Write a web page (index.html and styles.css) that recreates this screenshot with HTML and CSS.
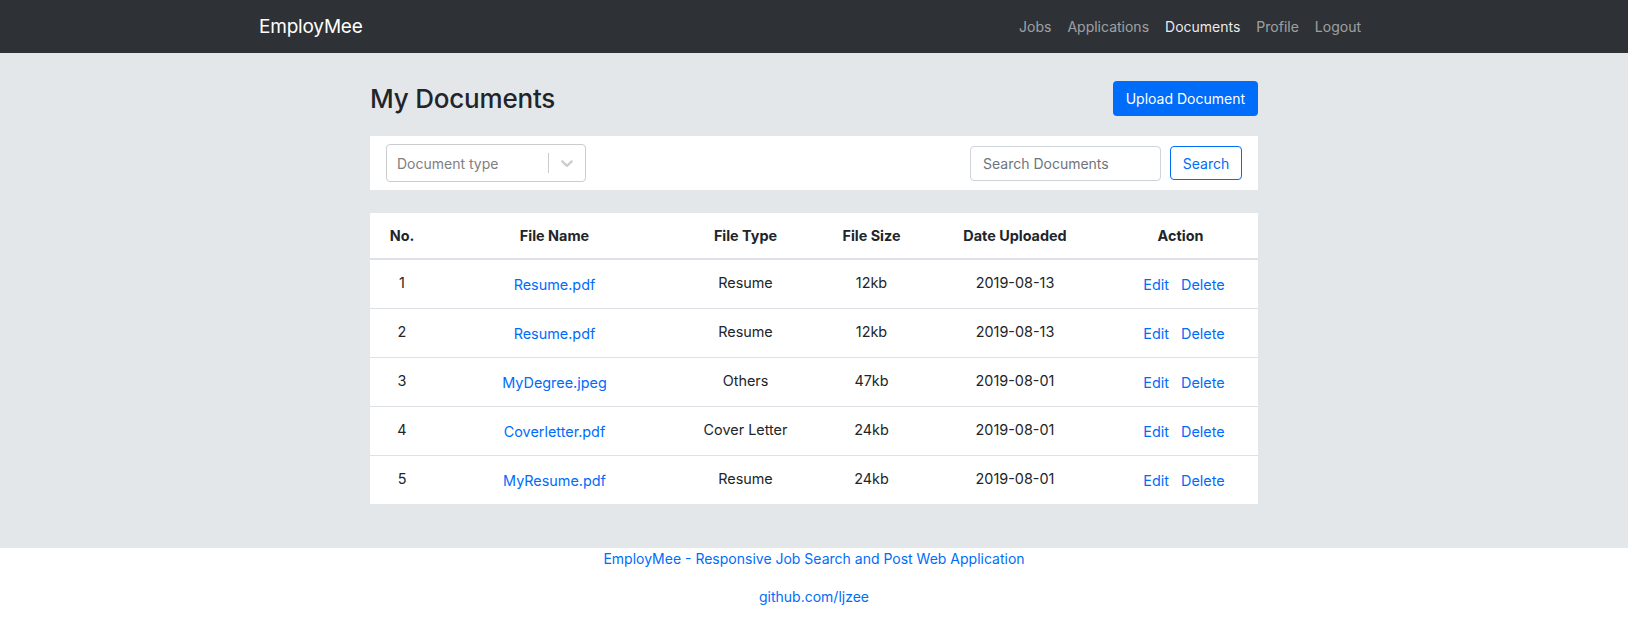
FILE: index.html
```html
<!DOCTYPE html>
<html lang="en">
<head>
<meta charset="utf-8">
<title>EmployMee - My Documents</title>
<link rel="stylesheet" href="styles.css">
</head>
<body>
<nav class="navbar">
  <div class="nav-container">
    <a class="brand" href="#">EmployMee</a>
    <ul class="nav-links">
      <li><a href="#">Jobs</a></li>
      <li><a href="#">Applications</a></li>
      <li><a class="active" href="#">Documents</a></li>
      <li><a href="#">Profile</a></li>
      <li><a href="#">Logout</a></li>
    </ul>
  </div>
</nav>
<main class="main">
  <div class="content">
    <div class="title-row">
      <h3 class="page-title">My Documents</h3>
      <button class="btn-primary" type="button">Upload Document</button>
    </div>
    <div class="filter-card">
      <div class="select">
        <div class="select-value">Document type</div>
        <div class="select-indicators">
          <span class="select-sep"></span>
          <span class="select-arrow">
            <svg viewBox="0 0 20 20" width="20" height="20"><path d="M4.516 7.548c0.436-0.446 1.043-0.481 1.576 0l3.908 3.747 3.908-3.747c0.533-0.481 1.141-0.446 1.574 0 0.436 0.445 0.408 1.197 0 1.615-0.406 0.418-4.695 4.502-4.695 4.502-0.217 0.223-0.502 0.335-0.787 0.335s-0.57-0.112-0.789-0.335c0 0-4.287-4.084-4.695-4.502s-0.436-1.170 0-1.615z"/></svg>
          </span>
        </div>
      </div>
      <form class="search-form">
        <input class="search-input" type="text" placeholder="Search Documents">
        <button class="btn-outline" type="button">Search</button>
      </form>
    </div>
    <div class="table-card">
      <table class="doc-table">
        <colgroup>
          <col class="c1"><col class="c2"><col class="c3"><col class="c4"><col class="c5"><col class="c6">
        </colgroup>
        <thead>
          <tr><th>No.</th><th>File Name</th><th>File Type</th><th>File Size</th><th>Date Uploaded</th><th>Action</th></tr>
        </thead>
        <tbody>
          <tr><td>1</td><td><a class="cell-link" href="#">Resume.pdf</a></td><td>Resume</td><td>12kb</td><td>2019-08-13</td><td><a class="cell-link edit" href="#">Edit</a><a class="cell-link delete" href="#">Delete</a></td></tr>
          <tr><td>2</td><td><a class="cell-link" href="#">Resume.pdf</a></td><td>Resume</td><td>12kb</td><td>2019-08-13</td><td><a class="cell-link edit" href="#">Edit</a><a class="cell-link delete" href="#">Delete</a></td></tr>
          <tr><td>3</td><td><a class="cell-link" href="#">MyDegree.jpeg</a></td><td>Others</td><td>47kb</td><td>2019-08-01</td><td><a class="cell-link edit" href="#">Edit</a><a class="cell-link delete" href="#">Delete</a></td></tr>
          <tr><td>4</td><td><a class="cell-link" href="#">Coverletter.pdf</a></td><td>Cover Letter</td><td>24kb</td><td>2019-08-01</td><td><a class="cell-link edit" href="#">Edit</a><a class="cell-link delete" href="#">Delete</a></td></tr>
          <tr><td>5</td><td><a class="cell-link" href="#">MyResume.pdf</a></td><td>Resume</td><td>24kb</td><td>2019-08-01</td><td><a class="cell-link edit" href="#">Edit</a><a class="cell-link delete" href="#">Delete</a></td></tr>
        </tbody>
      </table>
    </div>
  </div>
</main>
<footer class="footer">
  <p><a href="#">EmployMee - Responsive Job Search and Post Web Application</a></p>
  <p><a href="#">github.com/ljzee</a></p>
</footer>
</body>
</html>
```

FILE: styles.css
```css
* { box-sizing: border-box; }
html, body { margin: 0; padding: 0; }
body {
  font-family: Inter, "Liberation Sans", sans-serif;
  color: #212529;
  background: #ffffff;
  font-size: 16px;
}
a { text-decoration: none; color: #006cfa; }

.navbar {
  background: #2e3236;
  height: 53px;
}
.nav-container {
  width: 1140px;
  margin: 0 auto;
  padding: 0 15px;
  height: 100%;
  display: flex;
  align-items: center;
  justify-content: space-between;
}
.brand {
  color: #ffffff;
  font-size: 19px;
  letter-spacing: -0.2px;
}
.nav-links {
  list-style: none;
  margin: 0;
  padding: 0;
  display: flex;
}
.nav-links a {
  display: block;
  padding: 0 8px;
  font-size: 14px;
  color: rgba(255, 255, 255, 0.55);
}
.nav-links a.active { color: rgba(255, 255, 255, 0.92); }

.main {
  background: #e4e7ea;
  padding: 28px 0 44px;
}
.content {
  width: 888px;
  margin: 0 auto;
}
.title-row {
  display: flex;
  justify-content: space-between;
  align-items: center;
  margin-bottom: 20px;
}
.page-title {
  margin: 0;
  font-size: 26px;
  font-weight: 500;
  line-height: 1.2;
  letter-spacing: -0.2px;
}
.btn-primary {
  font-family: inherit;
  height: 35px;
  padding: 0 13px;
  border: none;
  border-radius: 4px;
  background: #006cfa;
  color: #ffffff;
  font-size: 14px;
}

.filter-card {
  background: #ffffff;
  padding: 8px 16px;
  display: flex;
  justify-content: space-between;
  align-items: center;
  margin-bottom: 22.5px;
}
.select {
  width: 200px;
  height: 38px;
  border: 1px solid #cccccc;
  border-radius: 4px;
  display: flex;
  align-items: center;
  justify-content: space-between;
  background: #ffffff;
}
.select-value {
  padding: 0 10px;
  color: #808080;
  font-size: 14px;
}
.select-indicators {
  display: flex;
  align-items: center;
  height: 100%;
}
.select-sep {
  width: 1px;
  height: 20px;
  background: #cccccc;
}
.select-arrow {
  display: flex;
  padding: 8px;
}
.select-arrow svg { fill: #cccccc; }

.search-form {
  display: flex;
  align-items: center;
  gap: 9px;
}
.search-input {
  width: 191px;
  height: 35px;
  border: 1px solid #ced4da;
  border-radius: 4px;
  padding: 0 12px;
  font-family: inherit;
  font-size: 14px;
  color: #495057;
}
.search-input::placeholder { color: #6c757d; }
.btn-outline {
  font-family: inherit;
  width: 72px;
  height: 34px;
  border: 1px solid #006cfa;
  border-radius: 4px;
  background: #ffffff;
  color: #006cfa;
  font-size: 14px;
  padding: 0;
}

.table-card { background: #ffffff; }
.doc-table {
  width: 100%;
  border-collapse: collapse;
  table-layout: fixed;
  font-size: 14.4px;
}
.c1 { width: 64px; }
.c2 { width: 241px; }
.c3 { width: 141px; }
.c4 { width: 111px; }
.c5 { width: 176px; }
.c6 { width: 155px; }
.doc-table th {
  padding: 12px;
  line-height: 21.6px;
  font-weight: 700;
  text-align: center;
  border-bottom: 2px solid #dee2e6;
}
.doc-table td {
  padding: 12px;
  line-height: 21.6px;
  text-align: center;
  vertical-align: top;
  border-top: 1px solid #dee2e6;
}
.doc-table tbody tr:first-child td { border-top: none; }
.cell-link {
  display: inline-block;
  padding-top: 2.4px;
}
.edit { margin-left: 7px; }
.delete { margin-left: 12px; }

.footer {
  text-align: center;
  font-size: 14px;
  line-height: 21px;
}
.footer p { margin: 0 0 17px; }
```
